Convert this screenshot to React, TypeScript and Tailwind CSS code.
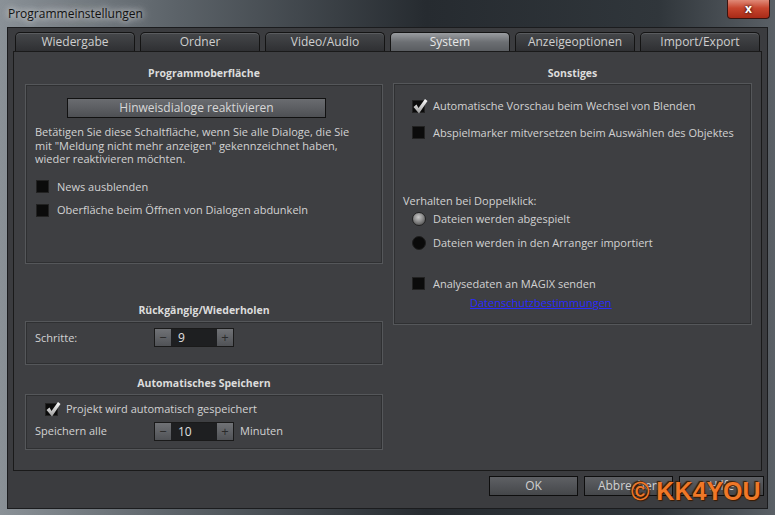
import React from 'react';

const font = { fontFamily: '"Open Sans", "Noto Sans", "DejaVu Sans", sans-serif' };

function Check({ checked = false }: { checked?: boolean }) {
  return (
    <span className="relative inline-block h-[13px] w-[13px] shrink-0 border border-[#222] bg-[#0b0b0b]">
      {checked && (
        <svg viewBox="0 0 16 16" className="absolute -left-[1px] -top-[3px] h-[16px] w-[16px]">
          <defs>
            <linearGradient id="ck" x1="0" y1="0" x2="0" y2="1">
              <stop offset="0" stopColor="#ffffff" />
              <stop offset="1" stopColor="#9a9a9a" />
            </linearGradient>
          </defs>
          <path d="M1.5 9 L4.5 6.5 L6.5 10 L13 1 L15.5 3 L7 15.5 Z" fill="url(#ck)" />
        </svg>
      )}
    </span>
  );
}

function Radio({ on = false }: { on?: boolean }) {
  return (
    <span
      className={`inline-block h-[14px] w-[14px] shrink-0 rounded-full ${
        on
          ? 'bg-[radial-gradient(circle_at_45%_35%,#c8c8c8,#8a8a8a_45%,#3a3a3a_100%)] border border-[#222]'
          : 'bg-[#0a0a0a] border border-[#1e1e1e]'
      }`}
    />
  );
}

function Spinner({ value }: { value: string }) {
  return (
    <div className="flex h-[19px] w-[80px] border border-[#1a1a1a] bg-[#1e1f21]">
      <div className="flex w-[16px] items-center justify-center bg-[linear-gradient(#707276,#505256)] text-[13px] leading-none text-[#2a2a2a]">−</div>
      <div className="flex-1 pl-[7px] text-[12px] leading-[17px] text-[#e0e0e0]">{value}</div>
      <div className="flex w-[16px] items-center justify-center bg-[linear-gradient(#707276,#505256)] text-[13px] leading-none text-[#2a2a2a]">+</div>
    </div>
  );
}

function Heading({ children }: { children: React.ReactNode }) {
  return <div className="h-[18px] text-center text-[10.5px] font-bold leading-[14px] text-[#dcdcdc]">{children}</div>;
}

function Box({ className = '', children }: { className?: string; children?: React.ReactNode }) {
  return (
    <div className={`border border-[#55575a] shadow-[inset_0_0_0_1px_#2f3032] ${className}`}>{children}</div>
  );
}

const tabs = ['Wiedergabe', 'Ordner', 'Video/Audio', 'System', 'Anzeigeoptionen', 'Import/Export'];
const buttons = [
  { label: 'OK', w: 'w-[89px]' },
  { label: 'Abbrechen', w: 'w-[89px]' },
  { label: 'Hilfe', w: 'w-[85px]' },
];

export default function App() {
  return (
    <div
      style={font}
      className="relative flex h-[515px] w-[775px] flex-col overflow-hidden bg-[linear-gradient(90deg,#8a9197,#5d646a_22%,#262b30_55%,#30363b_85%,#5a6066)] text-[11px] text-[#d2d2d2]"
    >
      {/* title bar */}
      <div className="flex h-[27px] items-start justify-between">
        <div className="pl-[8px] pt-[5px] text-[12px] text-[#111] [text-shadow:0_0_6px_#e8e8e8,0_0_10px_#c0c4c8]">
          Programmeinstellungen
        </div>
        <div className="mr-[5px] flex h-[19px] w-[43px] items-center justify-center rounded-b-[4px] border border-[#3a1410] border-t-0 bg-[linear-gradient(#e08a78,#c7452e_45%,#a82a17)] text-[12px] font-bold text-white [text-shadow:0_0_3px_#000]">
          x
        </div>
      </div>

      {/* client area */}
      <div className="mx-[7px] mb-[6px] flex flex-1 flex-col border border-[#1b1c1e] bg-[#3b3c3f]">
        <div className="flex gap-[5px] pl-[7px] pt-[4px]">
          {tabs.map(t => (
            <div
              key={t}
              className={`flex h-[19px] w-[120px] items-center justify-center rounded-t-[5px] border border-b-0 border-[#141414] text-[12px] leading-none ${
                t === 'System'
                  ? 'bg-[linear-gradient(#9a9da1,#6c6f73_50%,#5a5d61)] text-[#e8e8e8]'
                  : 'bg-[linear-gradient(#45474a,#2f3033)] text-[#cfcfcf] shadow-[inset_0_1px_0_#5a5c5f]'
              }`}
            >
              {t}
            </div>
          ))}
        </div>

        <div className="mx-[5px] grid h-[420px] grid-cols-[358px_359px] gap-x-[10px] border border-[#1a1a1a] bg-[#3e3f42] pl-[11px] pt-[14px]">
          {/* left */}
          <div className="flex flex-col">
            <Heading>Programmoberfläche</Heading>
            <Box className="h-[180px] px-[9px] pt-[13px]">
              <div className="ml-[32px] flex h-[20px] w-[259px] items-center justify-center border border-[#111] bg-[linear-gradient(#6a6c70,#4e5054)] text-[12px] text-[#d8d8d8]">
                Hinweisdialoge reaktivieren
              </div>
              <p className="mt-[7px] w-[322px] leading-[13.5px]">
                Betätigen Sie diese Schaltfläche, wenn Sie alle Dialoge, die Sie mit "Meldung nicht mehr anzeigen" gekennzeichnet haben, wieder reaktivieren möchten.
              </p>
              <div className="mt-[13px] flex items-center gap-[8px] pl-[1px]">
                <Check />
                <span>News ausblenden</span>
              </div>
              <div className="mt-[7px] flex items-center gap-[8px] pl-[1px]">
                <Check />
                <span>Oberfläche beim Öffnen von Dialogen abdunkeln</span>
              </div>
            </Box>

            <div className="mt-[39px]">
              <Heading>Rückgängig/Wiederholen</Heading>
            </div>
            <Box className="flex h-[44px] items-start px-[9px] pt-[6px]">
              <span className="w-[119px] leading-[19px]">Schritte:</span>
              <Spinner value="9" />
            </Box>

            <div className="mt-[11px]">
              <Heading>Automatisches Speichern</Heading>
            </div>
            <Box className="h-[56px] px-[9px] pt-[6px]">
              <div className="flex items-center gap-[8px] pl-[10px]">
                <Check checked />
                <span>Projekt wird automatisch gespeichert</span>
              </div>
              <div className="mt-[4px] flex items-center">
                <span className="w-[119px]">Speichern alle</span>
                <Spinner value="10" />
                <span className="ml-[6px]">Minuten</span>
              </div>
            </Box>
          </div>

          {/* right */}
          <div className="flex flex-col">
            <Heading>Sonstiges</Heading>
            <Box className="-mt-[1px] h-[242px] px-[9px] pt-[14px]">
              <div className="flex items-center gap-[8px] pl-[9px]">
                <Check checked />
                <span>Automatische Vorschau beim Wechsel von Blenden</span>
              </div>
              <div className="mt-[10px] flex items-center gap-[8px] pl-[9px]">
                <Check />
                <span>Abspielmarker mitversetzen beim Auswählen des Objektes</span>
              </div>
              <div className="mt-[52px]">Verhalten bei Doppelklick:</div>
              <div className="mt-[1px] flex items-center gap-[7px] pl-[9px]">
                <Radio on />
                <span>Dateien werden abgespielt</span>
              </div>
              <div className="mt-[8px] flex items-center gap-[7px] pl-[9px]">
                <Radio />
                <span>Dateien werden in den Arranger importiert</span>
              </div>
              <div className="mt-[24px] flex items-center gap-[8px] pl-[9px]">
                <Check />
                <span>Analysedaten an MAGIX senden</span>
              </div>
              <div className="mt-[3px] pl-[67px] text-[#2a2aff] underline">Datenschutzbestimmungen</div>
            </Box>
          </div>
        </div>

        {/* footer buttons */}
        <div className="flex justify-end gap-[6px] pr-[3px] pt-[5px]">
          {buttons.map(b => (
            <div
              key={b.label}
              className={`flex h-[20px] ${b.w} items-center justify-center border border-[#0e0e0e] bg-[linear-gradient(#5e6064,#45474a)] text-[12px] text-[#d0d0d0]`}
            >
              {b.label}
            </div>
          ))}
        </div>
      </div>

      {/* watermark */}
      <div
        className="absolute left-[631px] top-[479px] text-[25px] font-bold leading-none text-[#f07828] [text-shadow:1px_1px_1px_#3a1a00,-1px_-1px_1px_#3a1a00]"
        style={{ fontFamily: '"Liberation Sans", Arial, sans-serif' }}
      >
        © KK4YOU
      </div>
    </div>
  );
}
